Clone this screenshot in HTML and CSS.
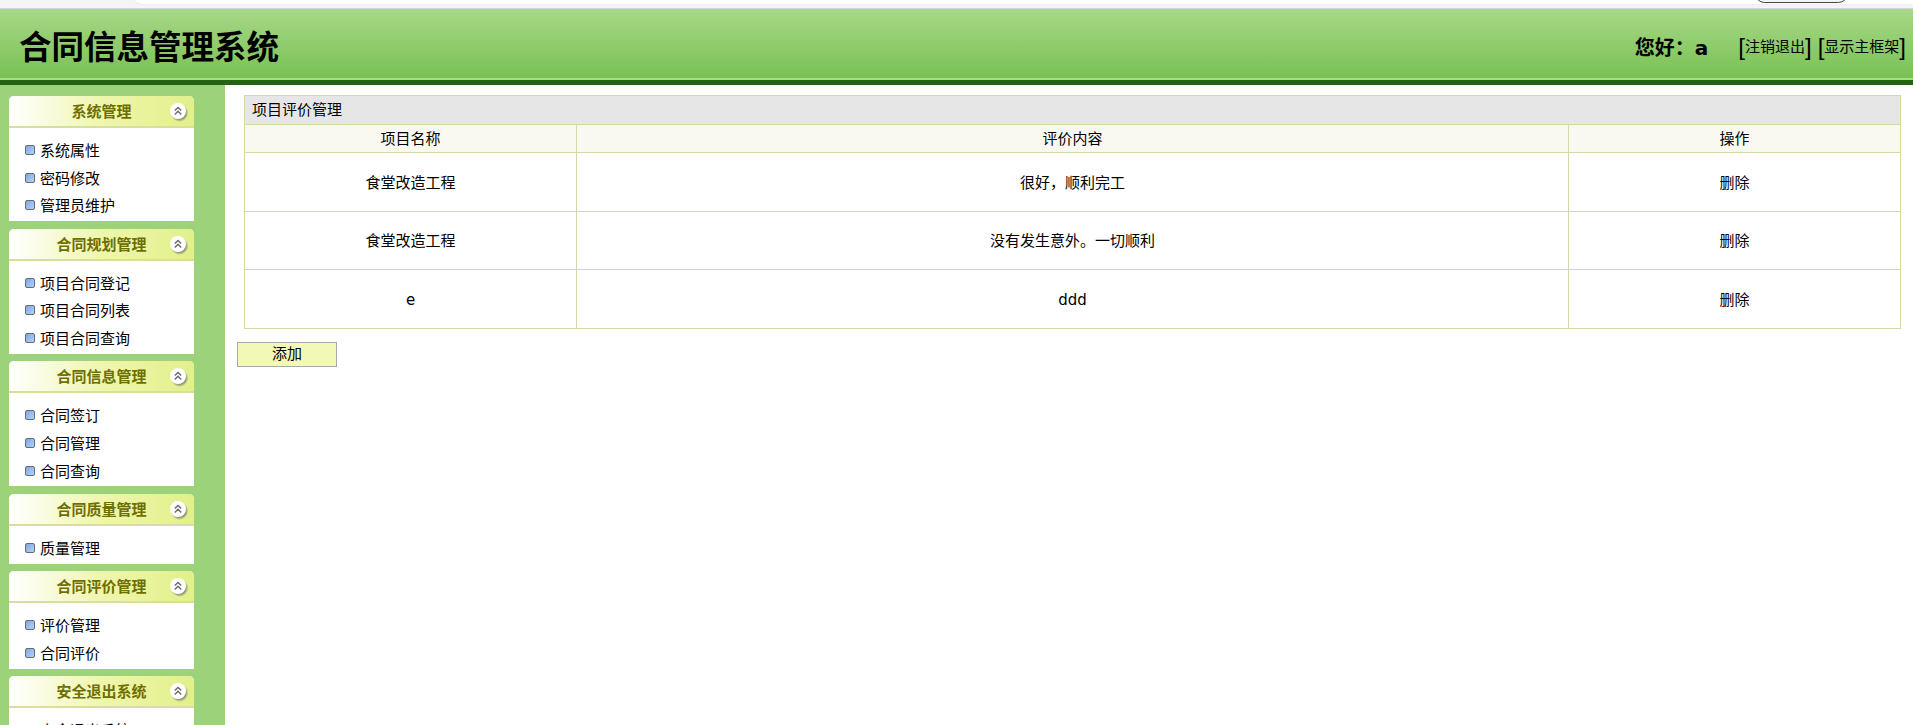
FILE: index.html
```html
<!DOCTYPE html>
<html lang="zh">
<head>
<meta charset="utf-8">
<title>合同信息管理系统</title>
<link rel="stylesheet" href="styles.css">
</head>
<body>
<div class="chrome"><div class="address"></div><div class="pill"></div></div>
<header class="banner">
  <h1 class="brand">合同信息管理系统</h1>
  <div class="user">
    <span class="hello">您好：a</span>
    <span class="links"><span class="br">[</span><a>注销退出</a><span class="br">]</span> <span class="br second">[</span><a>显示主框架</a><span class="br">]</span></span>
  </div>
</header>
<div class="main">
  <aside class="side">
    <section class="panel">
      <div class="panel-head"><span class="panel-title">系统管理</span><svg class="toggle" viewBox="0 0 20 20"><use href="#tg"/></svg></div>
      <ul class="menu"><li>系统属性</li><li>密码修改</li><li>管理员维护</li></ul>
    </section>
    <section class="panel">
      <div class="panel-head"><span class="panel-title">合同规划管理</span><svg class="toggle" viewBox="0 0 20 20"><use href="#tg"/></svg></div>
      <ul class="menu"><li>项目合同登记</li><li>项目合同列表</li><li>项目合同查询</li></ul>
    </section>
    <section class="panel">
      <div class="panel-head"><span class="panel-title">合同信息管理</span><svg class="toggle" viewBox="0 0 20 20"><use href="#tg"/></svg></div>
      <ul class="menu"><li>合同签订</li><li>合同管理</li><li>合同查询</li></ul>
    </section>
    <section class="panel">
      <div class="panel-head"><span class="panel-title">合同质量管理</span><svg class="toggle" viewBox="0 0 20 20"><use href="#tg"/></svg></div>
      <ul class="menu"><li>质量管理</li></ul>
    </section>
    <section class="panel">
      <div class="panel-head"><span class="panel-title">合同评价管理</span><svg class="toggle" viewBox="0 0 20 20"><use href="#tg"/></svg></div>
      <ul class="menu"><li>评价管理</li><li>合同评价</li></ul>
    </section>
    <section class="panel">
      <div class="panel-head"><span class="panel-title">安全退出系统</span><svg class="toggle" viewBox="0 0 20 20"><use href="#tg"/></svg></div>
      <ul class="menu"><li>安全退出系统</li></ul>
    </section>
  </aside>
  <main class="content">
    <table class="grid">
      <colgroup><col class="c1"><col class="c2"><col class="c3"></colgroup>
      <tr class="caption-row"><td colspan="3">项目评价管理</td></tr>
      <tr class="head-row"><td>项目名称</td><td>评价内容</td><td>操作</td></tr>
      <tr class="row"><td>食堂改造工程</td><td>很好，顺利完工</td><td>删除</td></tr>
      <tr class="row"><td>食堂改造工程</td><td>没有发生意外。一切顺利</td><td>删除</td></tr>
      <tr class="row"><td>e</td><td>ddd</td><td>删除</td></tr>
    </table>
    <button class="add" type="button">添加</button>
  </main>
</div>
<svg class="defs" width="0" height="0">
  <defs>
    <radialGradient id="tgshade" cx=".5" cy=".5" r=".5">
      <stop offset=".7" stop-color="#6f6f6f" stop-opacity=".7"/>
      <stop offset="1" stop-color="#6f6f6f" stop-opacity="0"/>
    </radialGradient>
    <g id="tg">
      <circle cx="10.5" cy="11" r="9" fill="url(#tgshade)"/>
      <circle cx="9" cy="9" r="8" fill="#fff"/>
      <path d="M5.8 8.6 9 5.4 12.2 8.6M5.8 12.4 9 9.2 12.2 12.4" fill="none" stroke="#6a6a6a" stroke-width="1.4"/>
    </g>
  </defs>
</svg>
</body>
</html>
```
FILE: styles.css
```css
* { box-sizing: border-box; }
html, body { margin: 0; padding: 0; height: 100%; overflow: hidden; }
body {
  background: #fff;
  color: #000;
  font: 15px/1.2 "DejaVu Sans", "Noto Sans CJK SC", sans-serif;
}
.chrome {
  height: 9px;
  background: #f5f5f5;
  border-bottom: 1px solid #d6d3dc;
  position: relative;
  overflow: hidden;
}
.address {
  position: absolute;
  left: 130px;
  right: 0;
  top: -14px;
  height: 18px;
  background: #fff;
  border-radius: 0 0 0 14px;
  box-shadow: 0 0 3px #e6e6e6;
}
.pill {
  position: absolute;
  left: 1755px;
  width: 93px;
  top: -16px;
  height: 19px;
  border: 1px solid #444;
  border-radius: 10px;
  background: #f5f5f5;
}
.banner {
  height: 76px;
  background: linear-gradient(#a7d887, #79c153 91%, #a5dc85 91%, #a5dc85 93.4%, #246214 93.4%);
  display: flex;
  align-items: center;
  justify-content: space-between;
  padding: 2px 7px 0 19px;
}
.brand { margin: 0; font-size: 32.5px; font-weight: 700; line-height: 1; }
.user { display: flex; align-items: center; }
.hello { font-size: 20px; font-weight: 700; margin-right: 30px; }
.links { font-size: 15px; white-space: nowrap; display: flex; align-items: center; padding-bottom: 2px; }
.br { font-size: 24px; line-height: 1; font-family: "Liberation Sans", sans-serif; font-weight: 400; }
.second { margin-left: 6px; }
.main { display: flex; height: 640px; }
.side {
  width: 225px;
  flex: none;
  background: #9cd279;
  padding: 11px 31px 0 9px;
  display: flex;
  flex-direction: column;
  gap: 7.6px;
  overflow: hidden;
}
.panel { background: #fff; flex: none; border-radius: 5px 5px 0 0; }
.panel-head {
  height: 32px;
  display: flex;
  align-items: center;
  justify-content: center;
  position: relative;
  border-radius: 5px 5px 0 0;
  border-bottom: 2px solid #d9de9e;
  background: linear-gradient(90deg, #fff, #eff6ad 50%, #e2f08a);
}
.panel-title { font-size: 15px; font-weight: 700; color: #6f6f00; padding-top: 2px; }
.toggle { position: absolute; right: 5px; top: 6px; width: 20px; height: 20px; }
.menu { list-style: none; margin: 0; padding: 8px 0 2px 0; }
.menu li {
  height: 27.7px;
  padding: 2px 0 0 31px;
  display: flex;
  align-items: center;
  font-size: 15px;
  position: relative;
}
.menu li::before {
  content: "";
  position: absolute;
  left: 16px;
  top: 9px;
  width: 8px;
  height: 8px;
  background: linear-gradient(135deg, #7fa8e0, #b4d2f8);
  border: 1px solid #666b75;
  border-radius: 2px;
}
.content { flex: 1; padding: 10px 12px 0 12px; }
.grid {
  margin-left: 7px;
  width: 1656px;
  border-collapse: collapse;
  table-layout: fixed;
  font-size: 15px;
}
.c1 { width: 332px; }
.c2 { width: 992px; }
.c3 { width: 332px; }
.grid td { border: 1px solid #d2dba4; text-align: center; padding: 1px 0 0; }
.caption-row td { height: 29px; background: #e6e6e6; text-align: left; padding: 0 0 0 7px; }
.head-row td { height: 28px; background: #f9f9f1; padding: 0; }
.row td { height: 58.5px; padding-top: 2px; }
.add {
  display: block;
  margin-top: 13px;
  width: 100px;
  height: 25px;
  background: #f2f8b6;
  border: 1px solid #a9a9a9;
  padding: 0;
  font: inherit;
  color: #000;
}
.defs { position: absolute; }
```
